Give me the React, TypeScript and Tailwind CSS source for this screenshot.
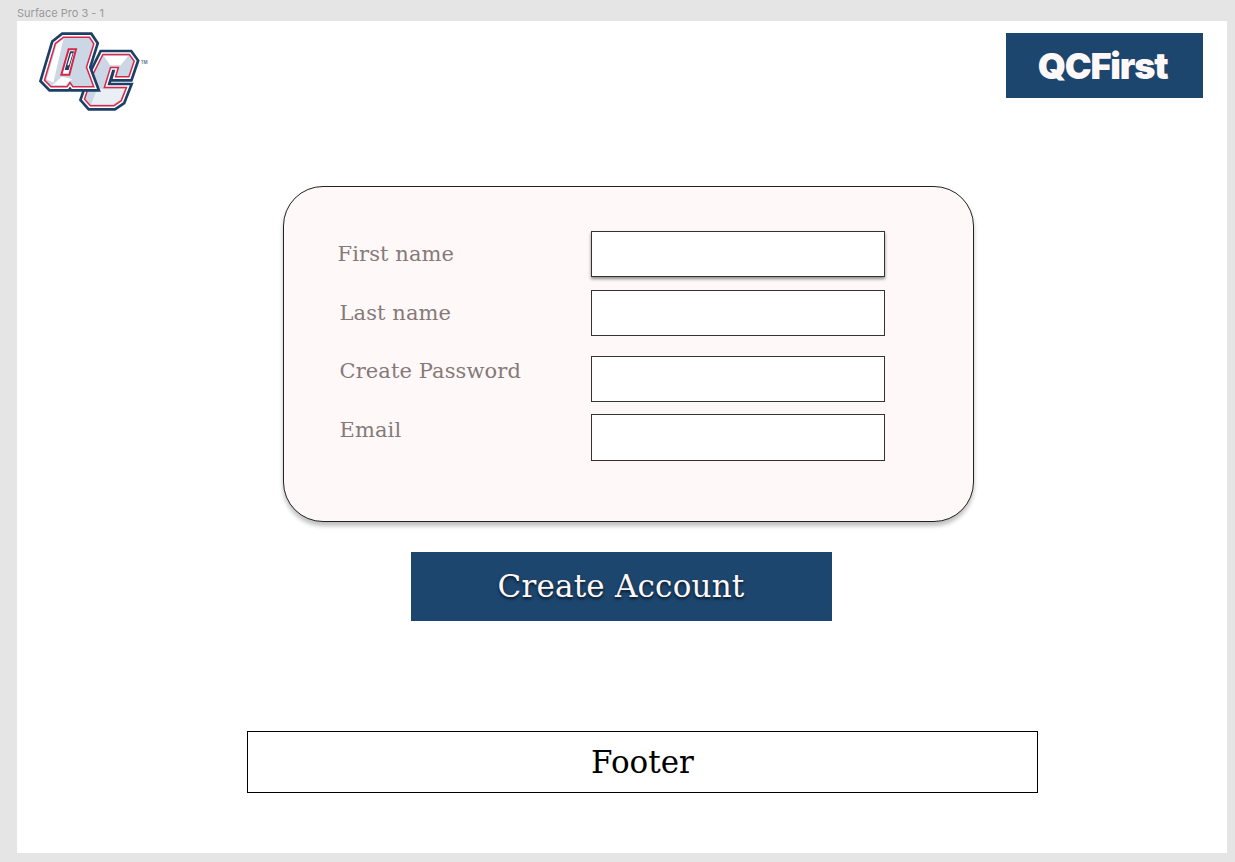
import React from 'react';

const serif = "font-['DejaVu_Serif','Liberation_Serif',serif]";

const QPath = 'M131 54 L207 54 L219 72 L197 142 L218 198 L160 198 L150 184 L140 198 L94 198 L76 180 L108 72 Z';
const CPath = 'M250 106 L327 106 L340 124 L325 168 L290 168 L298 140 L270 140 L250 205 L316 205 L302 241 L281 255 L212 255 L196 237 L220 166 Z';

const Outline: React.FC<{ d: string }> = ({ d }) => (
  <>
    <path d={d} fill="#1c3f66" stroke="#1c3f66" strokeWidth="34" strokeLinejoin="miter" />
    <path d={d} fill="#ffffff" stroke="#ffffff" strokeWidth="18" strokeLinejoin="miter" />
    <path d={d} fill="#d9254a" stroke="#d9254a" strokeWidth="9" strokeLinejoin="miter" />
    <path d={d} fill="#cbd7e4" />
  </>
);

const Logo: React.FC = () => (
  <svg width="115" height="82" viewBox="51 30 345 246" className="shrink-0" aria-hidden="true">
    {/* C sits behind the Q */}
    <Outline d={CPath} />
    <polygon points="252,108 324,108 302,136 270,136" fill="#ffffff" />
    <polygon points="214,252 232,205 252,208 314,207 300,239 279,252" fill="#e9eff4" />
    <Outline d={QPath} />
    <polygon points="110,74 130,58 100,188 80,178" fill="#ffffff" />
    <polygon points="98,195 125,170 158,178 148,184 138,195" fill="#ffffff" />
    {/* Q counter */}
    <polygon points="146,88 168,88 148,164 124,164" fill="#ffffff" stroke="#d9254a" strokeWidth="6" />
    <polygon points="150,94 162,94 146,150 134,150" fill="#1c3f66" />
    <polygon points="153,100 158,100 147,136 142,136" fill="#ffffff" />
    <text x="362" y="133" fontSize="13" fill="#6b7c90" fontFamily="Inter, sans-serif" fontWeight="700">TM</text>
  </svg>
);

const fields = [
  { label: 'First name', rowClass: 'h-[46px] mb-[13px]', labelClass: 'pl-[54px] pt-[8px]', inputClass: 'shadow-[0_2px_3px_rgba(0,0,0,0.45)]' },
  { label: 'Last name', rowClass: 'h-[46px] mb-[20px]', labelClass: 'pl-[56px] pt-[8px]', inputClass: '' },
  { label: 'Create Password', rowClass: 'h-[46px] mb-[12px]', labelClass: 'pl-[56px]', inputClass: '' },
  { label: 'Email', rowClass: 'h-[47px]', labelClass: 'pl-[56px] pt-[1px]', inputClass: '' },
];

export default function App() {
  return (
    <div className="w-[1235px] h-[862px] overflow-hidden bg-[#e5e5e5]">
      <p className="h-[21px] pl-[17px] pt-[6px] text-[11px] leading-[14px] text-[#9a9a9a] font-['Inter',sans-serif]">
        Surface Pro 3 - 1
      </p>
      <main className="mx-[17px] w-[1210px] h-[832px] bg-white flex flex-col items-center">
        <header className="w-full flex justify-between pl-[20px] pr-[24px] pt-[9px] h-[165px]">
          <Logo />
          <div className="w-[197px] h-[65px] mt-[3px] pr-[4px] bg-[#1c466e] flex items-center justify-center text-[36px] font-black tracking-[-1.2px] text-[#fff8f8] font-['Inter',sans-serif]">
            QCFirst
          </div>
        </header>

        <section className="w-[691px] h-[336px] ml-[12px] rounded-[40px] border border-[#222] bg-[#fff8f8] shadow-[0_4px_4px_rgba(0,0,0,0.25)] pt-[44px]">
          {fields.map((f) => (
            <div key={f.label} className={`flex ${f.rowClass}`}>
              <label className={`w-[307px] text-[#857a7a] text-[21px] tracking-[0.1px] leading-[30px] font-['DejaVu_Serif',serif] ${f.labelClass}`}>
                {f.label}
              </label>
              <div className={`w-[294px] h-full bg-white border border-black/80 ${f.inputClass}`} />
            </div>
          ))}
        </section>

        <button className={`w-[421px] h-[69px] mt-[30px] -ml-[2px] bg-[#1c466e] text-[#fff8f8] text-[31px] tracking-[0.2px] [text-shadow:0_2px_3px_rgba(0,0,0,0.7)] ${serif}`}>
          Create Account
        </button>

        <footer className={`w-[791px] h-[62px] mt-[110px] ml-[41px] border border-black bg-white flex items-center justify-center text-[31px] text-black ${serif}`}>
          Footer
        </footer>
      </main>
    </div>
  );
}
